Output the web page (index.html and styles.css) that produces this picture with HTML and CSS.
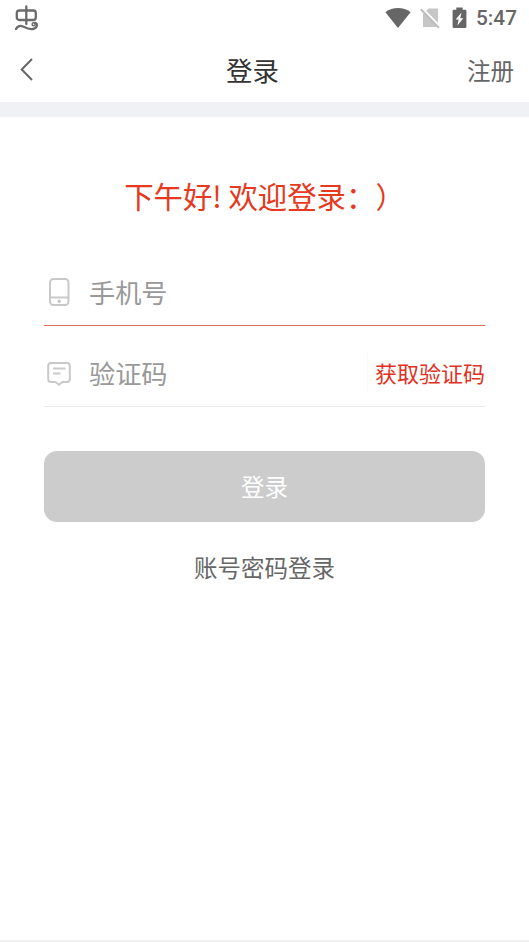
FILE: index.html
```html
<!DOCTYPE html>
<html lang="zh-CN">
<head>
<meta charset="utf-8">
<title>登录</title>
<link rel="stylesheet" href="styles.css">
</head>
<body>
<div class="screen">
  <div class="status">
    <svg class="bug" width="26" height="28" viewBox="0 0 26 28" fill="none" stroke="#6b6b6b" stroke-width="2.3" stroke-linecap="round" stroke-linejoin="round">
      <rect x="3.800" y="6.500" width="19" height="9.500" rx="2.500"/>
      <path d="M13.300 2.500v17.500M3 25c1.500-3 4-4 7-2.500 3.500 1.800 6 3.300 10 2.500 4.500-1 5-5.800 2-6.200"/>
      <circle cx="20.600" cy="20.300" r="1.500" stroke-width="1.500"/>
    </svg>
    <div class="status-icons">
      <svg width="26" height="22" viewBox="0 0 26 22"><path d="M13 21 .4 5.200Q6 1 13 1t12.600 4.200Z" fill="#666"/></svg>
      <svg width="22" height="22" viewBox="0 0 22 22"><path d="M8.500 1.500H18V20H3V7Z" fill="#c6c6c6"/><path d="M1.500 1 20.300 20" stroke="#fff" stroke-width="2.500"/><path d="M.8 2.300 18.800 20.800" stroke="#bdbdbd" stroke-width="2"/></svg>
      <svg width="15" height="22" viewBox="0 0 15 22"><path d="M4.300.5h6.400v2.300h2.500a1.200 1.200 0 0 1 1.200 1.200v15.800a1.200 1.200 0 0 1-1.200 1.200H1.800a1.200 1.200 0 0 1-1.200-1.200V4a1.200 1.200 0 0 1 1.200-1.200h2.500Z" fill="#666"/><path d="M9.500 5.500 3.700 12.600h3L5.400 18.500l5.900-7.300H8.200Z" fill="#fff"/></svg>
      <span class="time">5:47</span>
    </div>
  </div>
  <header class="nav">
    <svg width="14" height="24" viewBox="0 0 14 24" fill="none" stroke="#666" stroke-width="2"><path d="M12 1 1.700 11.500 12 22"/></svg>
    <h1>登录</h1>
    <span class="register">注册</span>
  </header>
  <main>
    <p class="greeting">下午好! 欢迎登录：）</p>
    <div class="field active">
      <svg class="icon" width="30" height="30" viewBox="0 0 30 30" fill="none" stroke="#c9c9c9" stroke-width="2"><rect x="6" y="2" width="18.500" height="26" rx="3.500"/><path d="M6 20.500h18.500"/><circle cx="15.200" cy="24.200" r="1.600" fill="#c0c0c0" stroke="none"/></svg>
      <span class="hint">手机号</span>
    </div>
    <div class="field">
      <svg class="icon" width="30" height="30" viewBox="0 0 30 30" fill="none" stroke="#c9c9c9" stroke-width="2" stroke-linejoin="round"><path d="M7 4h16a2.800 2.800 0 0 1 2.800 2.800v13.400A2.800 2.800 0 0 1 23 23h-4.500L15 25.700 11.500 23H7a2.800 2.800 0 0 1-2.800-2.800V6.800A2.800 2.800 0 0 1 7 4Z"/><path d="M9 9.500h12.500M9 14.500h7.500"/></svg>
      <span class="hint code">验证码</span>
      <span class="get-code">获取验证码</span>
    </div>
    <div class="submit">登录</div>
    <div class="alternate">账号密码登录</div>
  </main>
</div>
</body>
</html>
```
FILE: styles.css
```css
* { box-sizing: border-box; }
body {
  margin: 0;
  background: #fff;
  font-family: "Noto Sans CJK SC", sans-serif;
  text-spacing-trim: space-all;
}
svg { display: block; flex: none; }
.screen {
  height: 942px;
  display: flex;
  flex-direction: column;
  overflow: hidden;
  border-bottom: 2px solid #f0f0f0;
}
.status {
  height: 38px;
  padding: 4px 12px 0 13px;
  display: flex;
  justify-content: space-between;
}
.status-icons {
  display: flex;
  height: 27px;
  align-items: center;
}
.status-icons svg:nth-child(2) { margin-left: 9px; }
.status-icons svg:nth-child(3) { margin-left: 10px; }
.time {
  margin-left: 9px;
  font: 500 20.800px/27px Roboto, sans-serif;
  color: #666;
  padding-top: 2px;
}
.nav {
  height: 79px;
  border-bottom: 15px solid #f0f1f5;
  padding: 0 15px 0 20px;
  display: grid;
  grid-template-columns: 60px 1fr 60px;
  align-items: center;
  line-height: 40px;
}
h1 {
  margin: 0;
  font-size: 26.400px;
  font-weight: 400;
  color: #333;
  text-align: center;
  padding: 0 29px 1px 0;
}
.register {
  font-size: 23.500px;
  color: #666;
  text-align: right;
}
main { padding: 53px 44px 0; }
.greeting {
  margin: 0;
  font-size: 29.400px;
  line-height: 50px;
  text-align: center;
  color: #e73820;
  white-space: nowrap;
}
.field {
  height: 81px;
  display: flex;
  align-items: center;
  border-bottom: 1px solid #ebebeb;
  padding-top: 15px;
}
.field.active {
  height: 82px;
  margin-top: 24px;
  border-bottom-color: #e0705c;
}
.hint {
  margin-left: 15px;
  font-size: 26.200px;
  line-height: 40px;
  color: #999;
}
.hint.code { margin-bottom: 2px; }
.get-code {
  margin: 0 0 3px auto;
  padding-left: 7px;
  border-left: 1px solid #fafafa;
  font-size: 22px;
  line-height: 40px;
  color: #e0321f;
}
.submit {
  height: 71px;
  margin-top: 44px;
  border-radius: 13px;
  background: #ccc;
  color: #fff;
  font-size: 23.500px;
  line-height: 71px;
  text-align: center;
}
.alternate {
  margin-top: 25px;
  font-size: 23.500px;
  line-height: 40px;
  color: #666;
  text-align: center;
}
```
